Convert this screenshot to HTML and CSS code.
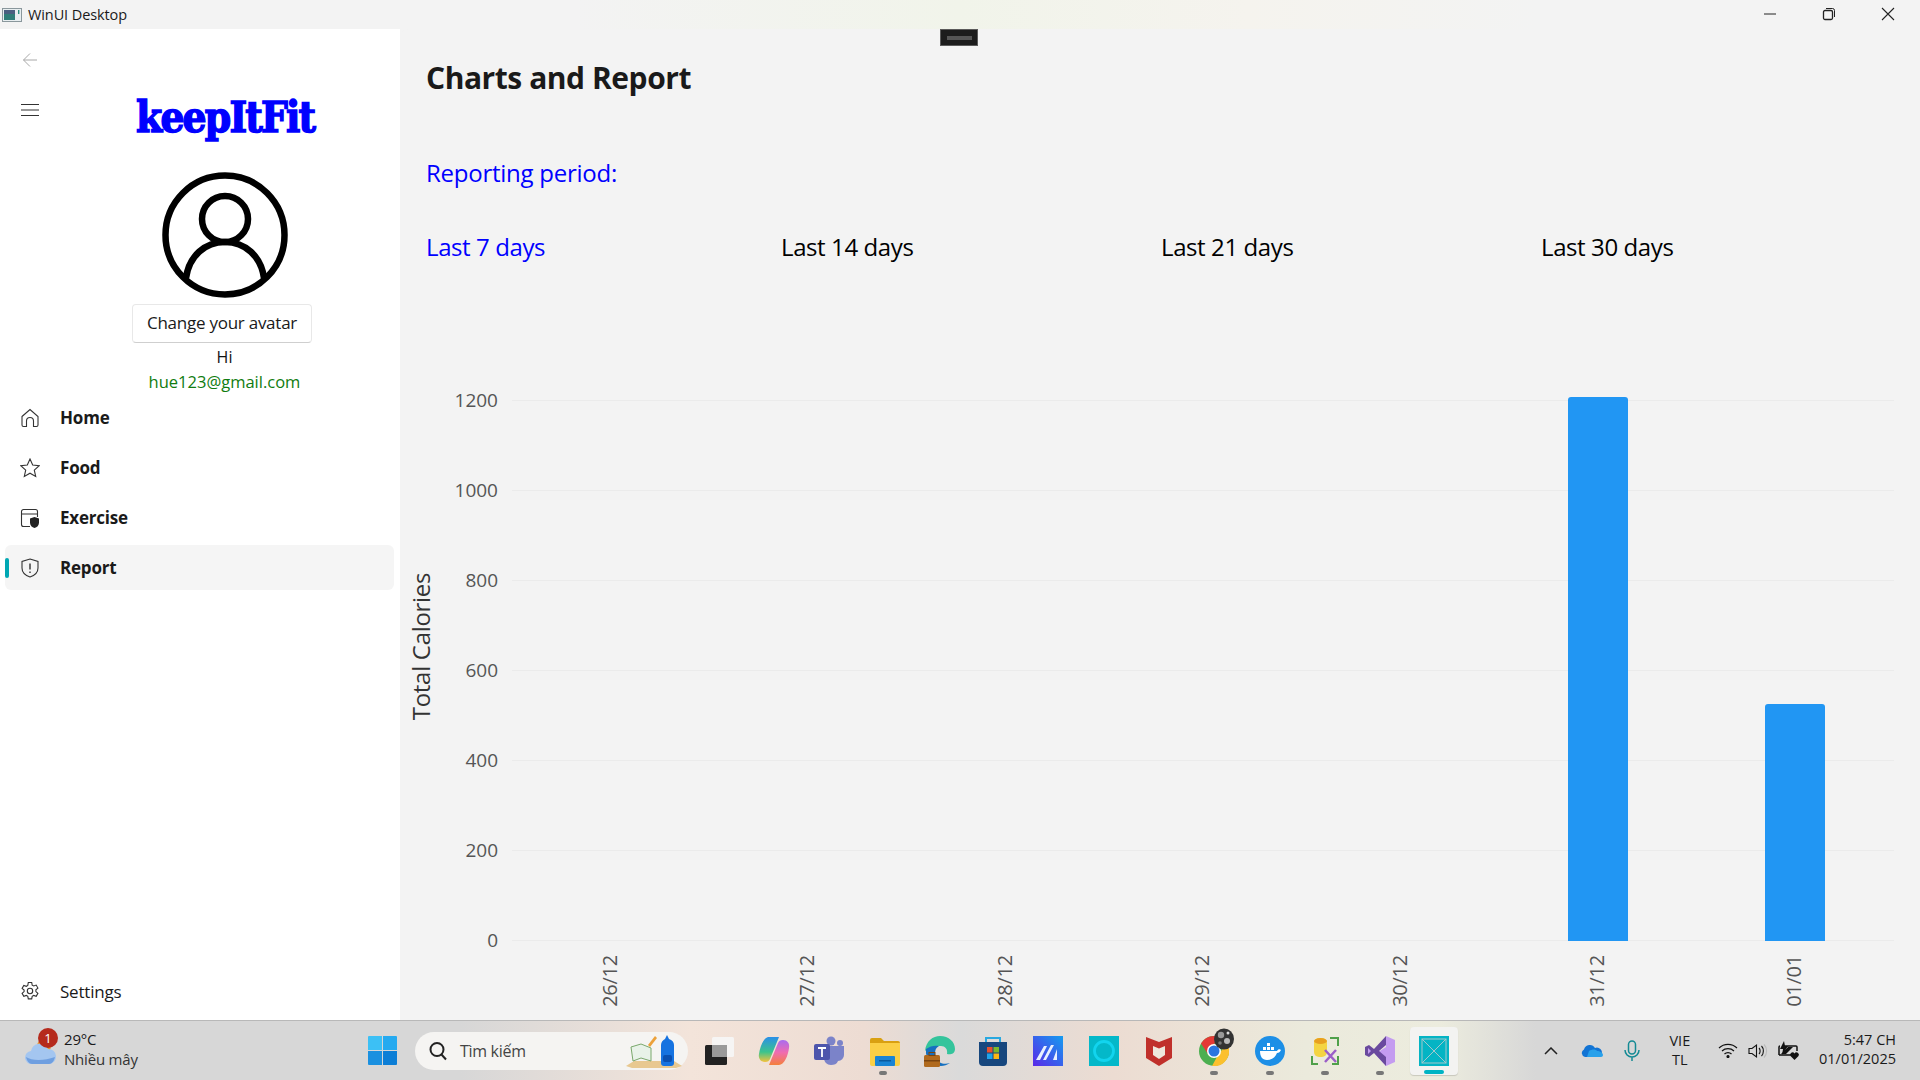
FILE: index.html
```html
<!DOCTYPE html>
<html lang="en">
<head>
    <meta charset="UTF-8">
    <title>WinUI Desktop</title>
    <link rel="stylesheet" href="styles.css">
</head>
<body>
    <header class="titlebar">
        <div class="app-title">
            <svg class="app-icon" width="20" height="14" viewBox="0 0 20 14">
                <rect x="0.5" y="0.5" width="19" height="13" fill="#e8eef0" stroke="#8a979c"/>
                <rect x="2" y="2" width="11" height="10" fill="#2f7d78"/>
                <rect x="2" y="2" width="11" height="4" fill="#4a5f80"/>
                <rect x="16" y="2" width="1.4" height="4" fill="#2c8f7f"/>
            </svg>
            <span>WinUI Desktop</span>
        </div>
        <div class="window-buttons">
            <svg width="14" height="14" viewBox="0 0 14 14"><path d="M1 7h12" stroke="#222" stroke-width="1"/></svg>
            <svg width="14" height="14" viewBox="0 0 14 14" fill="none" stroke="#222"><rect x="1.5" y="3.5" width="9" height="9" rx="1.5" stroke-width="1.3"/><path d="M4 1.5h6.5a2 2 0 0 1 2 2V10"/></svg>
            <svg width="14" height="14" viewBox="0 0 14 14"><path d="M1 1l12 12M13 1L1 13" stroke="#222" stroke-width="1.1"/></svg>
        </div>
    </header>

    <div class="app">
        <aside class="sidebar">
            <div class="sidebar-top">
                <div class="side-icons">
                    <svg width="16" height="16" viewBox="0 0 16 16" fill="none" stroke="#a8a8a8" stroke-width="1"><path d="M15 8H1.5M8 1.5L1.5 8 8 14.5"/></svg>
                    <svg class="menu-icon" width="18" height="14" viewBox="0 0 18 14" stroke="#333" stroke-width="1.1"><path d="M0 1.5h18M0 7h18M0 12.5h18"/></svg>
                </div>
                <div class="logo">keepItFit</div>
            </div>
            <div class="profile">
                <svg class="avatar" width="126" height="126" viewBox="0 0 126 126" fill="none" stroke="#000" stroke-width="6.5">
                    <circle cx="63" cy="63" r="59.5"/>
                    <circle cx="63" cy="47" r="23"/>
                    <path d="M24 106C27 84 43 70 63 70s36 14 39 36"/>
                </svg>
                <button class="avatar-btn">Change your avatar</button>
                <div class="hi">Hi</div>
                <div class="email">hue123@gmail.com</div>
            </div>
            <nav class="nav">
                <a class="nav-item">
                    <svg width="20" height="20" viewBox="0 0 20 20" fill="none" stroke="#333" stroke-width="1.1"><path d="M2 8.5L10 1.5l8 7v8.5a1.5 1.5 0 0 1-1.5 1.5H13.5V13a3.5 3.5 0 0 0-7 0v5.500H3.500A1.500 1.500 0 0 1 2 17z"/></svg>
                    <span>Home</span>
                </a>
                <a class="nav-item">
                    <svg width="20" height="20" viewBox="0 0 20 20" fill="none" stroke="#333" stroke-width="1.1"><path d="M10 1l2.700 6 6.500.7-4.900 4.400 1.400 6.400L10 15.200l-5.700 3.300 1.400-6.400L.8 7.700 7.300 7z"/></svg>
                    <span>Food</span>
                </a>
                <a class="nav-item">
                    <svg width="20" height="20" viewBox="0 0 20 20"><path d="M10 18.500H3.500a2 2 0 0 1-2-2v-13a2 2 0 0 1 2-2h12a2 2 0 0 1 2 2V9M1.500 6h16" fill="none" stroke="#333" stroke-width="1.1"/><path d="M14.500 9l4.500 1.500v4c0 3-2 5-4.500 5.500-2.500-.5-4.500-2.500-4.500-5.500v-4z" fill="#222"/></svg>
                    <span>Exercise</span>
                </a>
                <a class="nav-item selected">
                    <svg width="20" height="20" viewBox="0 0 20 20" fill="none" stroke="#333" stroke-width="1.1"><path d="M10 1l8 2.500V10c0 4.500-3.500 7.500-8 9-4.500-1.500-8-4.500-8-9V3.500z"/><path d="M10 5.500v6M10 13.500V15" stroke-width="1.4"/></svg>
                    <span>Report</span>
                </a>
            </nav>
            <a class="settings">
                <svg width="20" height="20" viewBox="0 0 20 20" fill="none" stroke="#333" stroke-width="1.1"><circle cx="10" cy="10" r="2.700"/><path d="M8.300 1.500h3.400l.5 2.600 1.500.9 2.500-.9 1.700 3-2 1.700v1.800l2 1.700-1.700 3-2.500-.9-1.500.9-.5 2.600H8.300l-.5-2.600-1.500-.9-2.500.9-1.700-3 2-1.700V9.100l-2-1.700 1.700-3 2.500.9 1.500-.9z"/></svg>
                <span>Settings</span>
            </a>
        </aside>

        <main class="content">
            <div class="drag-handle"><i></i></div>
            <h1>Charts and Report</h1>
            <div class="period-label">Reporting period:</div>
            <div class="periods">
                <div class="active">Last 7 days</div>
                <div>Last 14 days</div>
                <div>Last 21 days</div>
                <div>Last 30 days</div>
            </div>

            <section class="chart">
                <div class="y-title"><span>Total Calories</span></div>
                <div class="y-axis">
                    <span>1200</span><span>1000</span><span>800</span><span>600</span><span>400</span><span>200</span><span>0</span>
                </div>
                <div class="plot">
                    <div class="slot"></div>
                    <div class="slot"></div>
                    <div class="slot"></div>
                    <div class="slot"></div>
                    <div class="slot"></div>
                    <div class="slot"><div class="bar" style="height: 544px"></div></div>
                    <div class="slot"><div class="bar" style="height: 237px"></div></div>
                </div>
                <div class="x-axis">
                    <div><span>26/12</span></div>
                    <div><span>27/12</span></div>
                    <div><span>28/12</span></div>
                    <div><span>29/12</span></div>
                    <div><span>30/12</span></div>
                    <div><span>31/12</span></div>
                    <div><span>01/01</span></div>
                </div>
            </section>
        </main>
    </div>

    <footer class="taskbar">
        <div class="weather">
            <div class="weather-icon">
                <svg width="34" height="34" viewBox="0 0 34 34">
                    <circle cx="21" cy="13" r="7" fill="#e8922e"/>
                    <path d="M9 31a6.500 6.500 0 0 1-1-13 9 9 0 0 1 17-2 7.500 7.500 0 0 1 1 15z" fill="#a4c6f0"/>
                    <path d="M3 24c6 4 18 4 29 0-1 4-3 7-6 7H9c-3 0-5-3-6-7z" fill="#6f9fe0"/>
                </svg>
                <b class="badge">1</b>
            </div>
            <div class="weather-text">
                <div>29°C</div>
                <div>Nhiều mây</div>
            </div>
        </div>

        <svg class="start" width="29" height="29" viewBox="0 0 29 29">
            <path d="M1 0h13v14H0V1a1 1 0 0 1 1-1z" fill="#3cc0f5"/>
            <path d="M15 0h13a1 1 0 0 1 1 1v13H15z" fill="#25aaf0"/>
            <path d="M0 15h14v14H1a1 1 0 0 1-1-1z" fill="#1a90e0"/>
            <path d="M15 15h14v13a1 1 0 0 1-1 1H15z" fill="#0c7ed6"/>
        </svg>

        <div class="search">
            <svg width="20" height="20" viewBox="0 0 20 20" fill="none" stroke="#222" stroke-width="2"><circle cx="9" cy="8.500" r="6.500"/><path d="M13.500 13.500L18 18.500"/></svg>
            <span>Tìm kiếm</span>
            <svg class="search-art" width="56" height="36" viewBox="0 0 56 36">
                <path d="M0 33l8-5h40l8 5-6 2H6z" fill="#e8c890"/>
                <path d="M5 14l10-3 10 4v13l-10-3-8 3z" fill="#e8f2e8" stroke="#7aa86c"/>
                <path d="M22 12l7-9 2 2-7 9z" fill="#eca13a"/>
                <path d="M35 30V12c0-3 2-5 4-6l2-4 2 4c3 1 5 3 5 6v18a3 3 0 0 1-3 3H38a3 3 0 0 1-3-3z" fill="#1572e0"/>
                <rect x="37" y="22" width="9" height="7" rx="2" fill="#0a4fb0"/>
            </svg>
        </div>

        <div class="task-icons">
            <!-- task view -->
            <div class="task-icon">
                <svg class="nudge" width="30" height="30" viewBox="0 0 30 30"><rect x="1" y="9" width="22" height="20" rx="1.500" fill="#222"/><rect x="8" y="1" width="22" height="20" rx="1.500" fill="#f6f6f6" opacity=".92"/><rect x="8" y="9" width="15" height="12" fill="#9a9a9a"/></svg>
            </div>
            <!-- copilot -->
            <div class="task-icon">
                <svg class="nudge" width="32" height="30" viewBox="0 0 32 30">
                    <defs>
                        <linearGradient id="cpl" x1="0" y1="0" x2="0" y2="1"><stop offset="0" stop-color="#2a8fe8"/><stop offset=".6" stop-color="#3cc48c"/><stop offset="1" stop-color="#f4c23c"/></linearGradient>
                        <linearGradient id="cpr" x1="0" y1="0" x2="0" y2="1"><stop offset="0" stop-color="#a86cf0"/><stop offset=".5" stop-color="#f06cb0"/><stop offset="1" stop-color="#f4803c"/></linearGradient>
                    </defs>
                    <path d="M11 1h10l-9 22c-1 2-2 3-5 3-4 0-7-3-6-8C2 10 6 1 11 1z" fill="url(#cpl)"/>
                    <path d="M21 29H11l9-22c1-2 2-3 5-3 4 0 7 3 6 8-1 8-5 17-10 17z" fill="url(#cpr)"/>
                </svg>
            </div>
            <!-- teams -->
            <div class="task-icon">
                <svg class="nudge" width="30" height="30" viewBox="0 0 30 30"><circle cx="26" cy="7" r="3" fill="#7b83c9"/><circle cx="17" cy="5" r="4.500" fill="#7b83c9"/><path d="M10 10h20v9a6 6 0 0 1-6 6c-1 3-4 4-7 4-4 0-7-3-7-7z" fill="#7b83c9"/><rect x="0" y="8" width="16" height="16" rx="2" fill="#4d55ac"/><path d="M4 12h8M8 12v9" stroke="#fff" stroke-width="1.800"/></svg>
            </div>
            <!-- explorer -->
            <div class="task-icon dot">
                <svg class="nudge" width="30" height="30" viewBox="0 0 30 30"><path d="M0 4a2 2 0 0 1 2-2h9l3 3h14a2 2 0 0 1 2 2v4H0z" fill="#d9a011"/><path d="M0 7h30v21a2 2 0 0 1-2 2H2a2 2 0 0 1-2-2z" fill="#fbcf45"/><rect x="5" y="20" width="20" height="10" rx="1" fill="#1a84d4"/><rect x="9" y="24" width="12" height="1.500" fill="#0b5a9e"/></svg>
            </div>
            <!-- edge for business -->
            <div class="task-icon">
                <svg class="nudge" width="32" height="32" viewBox="0 0 32 32"><path d="M1 16C2 6 9 1 16 1c9 0 15 6 15 13 0 5-5 6-8 5 1-5-2-8-6-8-6 0-12 1-16 5z" fill="#34c49c"/><path d="M2 14C6 11 11 10 15 11c-4 2-5 7-3 12 2 5 8 7 14 5-3 2-6 3-9 3C8 31 1 25 2 14z" fill="#1670c0"/><rect x="0" y="20" width="16" height="12" rx="1.500" fill="#b06a1e"/><rect x="5" y="17.500" width="6" height="3" fill="none" stroke="#7a4510"/><rect x="0" y="25" width="16" height="1.500" fill="#7a4510"/></svg>
            </div>
            <!-- store -->
            <div class="task-icon">
                <svg width="30" height="32" viewBox="0 0 30 32"><path d="M8 8V3h14v5" fill="none" stroke="#29a8e0" stroke-width="2"/><path d="M1 7h28v20a4 4 0 0 1-4 4H5a4 4 0 0 1-4-4z" fill="#17477e"/><rect x="9" y="12" width="5.500" height="5.500" fill="#e8502e"/><rect x="15.500" y="12" width="5.500" height="5.500" fill="#7ab82c"/><rect x="9" y="18.500" width="5.500" height="5.500" fill="#1ea4ea"/><rect x="15.500" y="18.500" width="5.500" height="5.500" fill="#fcb614"/></svg>
            </div>
            <!-- mail app -->
            <div class="task-icon">
                <svg width="30" height="30" viewBox="0 0 30 30"><defs><linearGradient id="mm" x1="1" y1="0" x2="0" y2="1"><stop offset="0" stop-color="#149cf0"/><stop offset="1" stop-color="#5a28e8"/></linearGradient></defs><rect width="30" height="30" fill="url(#mm)"/><path d="M3 24l8-14h3L7 24zM10 24l8-15h3l-8 15zM20 24l4-11v11z" fill="#e8f0ff"/></svg>
            </div>
            <!-- alexa -->
            <div class="task-icon">
                <svg width="30" height="30" viewBox="0 0 30 30"><rect width="30" height="30" fill="#04b8c9"/><circle cx="15" cy="15" r="9.500" fill="none" stroke="#12d4ee" stroke-width="2.800"/></svg>
            </div>
            <!-- mcafee -->
            <div class="task-icon">
                <svg width="26" height="30" viewBox="0 0 26 30"><path d="M0 1l13 5 13-5v21l-13 8-13-8z" fill="#c0302b"/><path d="M7 10l6 2.500 6-2.500v9l-6 4-6-4z" fill="#eee8dc"/></svg>
            </div>
            <!-- chrome -->
            <div class="task-icon dot">
                <svg width="30" height="30" viewBox="0 0 30 30"><circle cx="15" cy="15" r="15" fill="#4caf50"/><path d="M15 0a15 15 0 0 1 13 7.500H15z" fill="#e53935"/><path d="M2 7.500A15 15 0 0 1 15 0v7.500L9 18z" fill="#e53935"/><path d="M28 7.500A15 15 0 0 1 13 30l6-11z" fill="#fbc02d"/><circle cx="15" cy="15" r="7" fill="#fff"/><circle cx="15" cy="15" r="5.500" fill="#2a75e0"/></svg>
                <svg class="chrome-badge" width="20" height="22" viewBox="0 0 20 22"><ellipse cx="10" cy="11" rx="10" ry="10.500" fill="#333"/><circle cx="7" cy="7" r="3.200" fill="#999"/><circle cx="13" cy="13" r="3" fill="#bbb"/><circle cx="6" cy="15" r="1.800" fill="#777"/><circle cx="14" cy="5" r="1.500" fill="#ddd"/></svg>
            </div>
            <!-- docker -->
            <div class="task-icon dot">
                <svg width="30" height="30" viewBox="0 0 30 30"><circle cx="15" cy="15" r="15" fill="#1d8fe6"/><path d="M5 15h17c1-2 3-2 4-1-1 2-2 3-4 3-2 5-6 7-10 7-5 0-7-4-7-9z" fill="#fff"/><path d="M8 11h3v3H8zM12 11h3v3h-3zM16 11h3v3h-3zM12 7h3v3h-3z" fill="#fff"/></svg>
            </div>
            <!-- sql tools -->
            <div class="task-icon dot">
                <svg width="30" height="30" viewBox="0 0 30 30"><path d="M20 2h8v8M28 20v8h-6M2 20v8h6" fill="none" stroke="#4fa04a" stroke-width="2"/><rect x="4" y="2" width="13" height="19" rx="5" fill="#f4d442"/><ellipse cx="10.500" cy="5" rx="6.500" ry="3" fill="#e8a020"/><path d="M15 14l11 12M26 14L15 26" stroke="#9b5fc8" stroke-width="2.500"/></svg>
            </div>
            <!-- visual studio -->
            <div class="task-icon dot">
                <svg width="30" height="30" viewBox="0 0 30 30"><path d="M21 0l9 4v22l-9 4-11-12 11-7z" fill="#c49cf0"/><path d="M21 0L9 13l-5-4-4 2v8l4 2 5-4 12 13v-9l-7-6 7-6z" fill="#6a4a9e"/><path d="M3 12l3 3-3 3z" fill="#c49cf0"/></svg>
            </div>
            <div class="task-icon running">
                <svg width="30" height="30" viewBox="0 0 30 30"><rect width="30" height="30" fill="#04b4c4"/><rect x="3" y="3" width="24" height="24" fill="none" stroke="#a4c8cc" stroke-width="1"/><path d="M3 3l24 24M27 3L3 27" stroke="#a4c8cc" stroke-width="1"/></svg>
            </div>
        </div>

        <div class="tray">
            <svg class="tray-chevron" width="14" height="8" viewBox="0 0 14 8" fill="none" stroke="#222" stroke-width="1.500"><path d="M1 7l6-6 6 6"/></svg>
            <svg class="tray-cloud" width="22" height="14" viewBox="0 0 22 14"><path d="M4 13a4 4 0 0 1-1-7.500A6 6 0 0 1 14 4a4.500 4.500 0 0 1 4 9z" fill="#1274d4"/><path d="M8 7c3-2 7-2 8 0 3 0 6 2 6 4s-2 2-3 2H6z" fill="#28a0ea"/></svg>
            <svg class="tray-mic" width="16" height="22" viewBox="0 0 16 22" fill="none" stroke="#148a94" stroke-width="1.500"><rect x="4.500" y="1" width="7" height="13" rx="3.500"/><path d="M1 10a7 7 0 0 0 14 0M8 17v4"/></svg>
            <div class="lang"><div>VIE</div><div>TL</div></div>
            <svg class="tray-wifi" width="20" height="15" viewBox="0 0 20 15" fill="none" stroke="#111" stroke-width="1.200"><path d="M1 5a13 13 0 0 1 18 0M4 8a9 9 0 0 1 12 0M6.500 11a5 5 0 0 1 7 0"/><circle cx="10" cy="13.500" r="1" fill="#111"/></svg>
            <svg class="tray-volume" width="20" height="16" viewBox="0 0 20 16" fill="none" stroke="#111" stroke-width="1.100"><path d="M1 5.500h3L8.500 2v12L4 10.500H1z"/><path d="M11 5c1.500 1.500 1.500 4.500 0 6M13.500 3c2.500 2.500 2.500 7.500 0 10"/><path d="M16 1.500c3.500 3.500 3.500 9.500 0 13" stroke="#bbb"/></svg>
            <svg class="tray-battery" width="22" height="20" viewBox="0 0 22 20"><path d="M5 5h13a1 1 0 0 1 1 1v4M1 14V6a1 1 0 0 1 1-1M1 14h12" fill="none" stroke="#111" stroke-width="1.500"/><path d="M6 0L2 8h3l-1 6 6-9H7z" fill="#111"/><path d="M3 13l7-7h5l-7 7z" fill="#111"/><path d="M16.500 19l-4-4a2.300 2.300 0 0 1 4-2.500 2.300 2.300 0 0 1 4 2.500z" fill="#111"/></svg>
            <div class="clock"><div>5:47 CH</div><div>01/01/2025</div></div>
        </div>
    </footer>
</body>
</html>
```

FILE: styles.css
```css
* {
    box-sizing: border-box;
}
html, body {
    height: 100%;
}
body {
    margin: 0;
    width: 1920px;
    height: 1080px;
    overflow: hidden;
    display: flex;
    flex-direction: column;
    font-family: "Open Sans", "Noto Sans", sans-serif;
    color: #1a1a1a;
    background-color: #f3f3f3;
}

/* title bar */
.titlebar {
    height: 29px;
    flex: none;
    display: flex;
    justify-content: space-between;
    align-items: center;
    background: linear-gradient(90deg, #f3f3f3 30%, #f1f4ea 50%, #f5f3ee 65%, #f3f3f3 80%);
}
.app-title {
    display: flex;
    align-items: center;
    gap: 6px;
    padding-left: 2px;
    font-size: 14.5px;
    letter-spacing: -0.1px;
}
.window-buttons {
    display: flex;
    align-items: center;
    gap: 45px;
    padding-right: 25px;
    margin-top: -2px;
}

.app {
    flex: 1;
    display: flex;
    min-height: 0;
}

/* sidebar */
.sidebar {
    width: 400px;
    flex: none;
    background-color: #fff;
    display: flex;
    flex-direction: column;
}
.sidebar-top {
    display: flex;
    height: 140px;
}
.side-icons {
    width: 136px;
    padding: 23px 0 0 22px;
    display: flex;
    flex-direction: column;
    gap: 35px;
}
.menu-icon {
    margin-left: -1px;
}
.logo {
    font-family: "DejaVu Serif", serif;
    font-weight: 700;
    font-stretch: condensed;
    font-size: 42px;
    letter-spacing: -1.8px;
    line-height: 46px;
    color: #0000ff;
    -webkit-text-stroke: 1.4px #0000ff;
    margin-top: 66px;
    height: 46px;
}
.profile {
    display: flex;
    flex-direction: column;
    align-items: center;
    padding-left: 49px;
}
.avatar {
    display: block;
    margin-top: 3px;
}
.avatar-btn {
    width: 180px;
    height: 39px;
    margin: 6px 5px 0 0;
    padding: 0 0 2px;
    font: inherit;
    font-size: 17px;
    letter-spacing: -0.25px;
    color: #1a1a1a;
    background-color: #fff;
    border: 1px solid #e8e8e8;
    border-bottom-color: #cfcfcf;
    border-radius: 4px;
}
.hi {
    font-size: 16px;
    line-height: 24px;
    margin-top: 2px;
    color: #111;
}
.email {
    font-size: 16.5px;
    line-height: 24px;
    margin-top: 1px;
    color: #107c10;
}
.nav {
    margin-top: 1px;
    padding: 0 6px 0 5px;
    display: flex;
    flex-direction: column;
    gap: 5px;
}
.nav-item {
    height: 45px;
    display: flex;
    align-items: center;
    gap: 20px;
    padding-left: 15px;
    position: relative;
    border-radius: 6px;
    font-size: 17px;
    font-weight: 700;
    letter-spacing: -0.2px;
}
.nav-item.selected {
    background-color: #f5f5f5;
}
.nav-item.selected::before {
    content: "";
    position: absolute;
    left: 0;
    top: 13px;
    width: 4px;
    height: 20px;
    border-radius: 2px;
    background-color: #00a7b3;
}
.settings {
    margin-top: auto;
    height: 58px;
    padding-left: 20px;
    display: flex;
    align-items: center;
    gap: 20px;
    font-size: 17px;
    letter-spacing: -0.2px;
}

/* main panel */
.content {
    flex: 1;
    min-width: 0;
    padding: 0 26px;
    background-color: #f3f3f3;
    border-top-left-radius: 8px;
    display: flex;
    flex-direction: column;
    position: relative;
}
.drag-handle {
    position: absolute;
    top: 0;
    left: 540px;
    width: 38px;
    height: 17px;
    background-color: #1c1c1c;
    border: 1px solid #5a5a5a;
    display: flex;
    align-items: center;
    justify-content: center;
}
.drag-handle i {
    display: block;
    width: 25px;
    height: 4px;
    background-color: #555;
}
h1 {
    margin: 27px 0 0;
    font-size: 30px;
    line-height: 44px;
    font-weight: 700;
    letter-spacing: -0.45px;
}
.period-label {
    margin-top: 55px;
    font-size: 24px;
    line-height: 36px;
    letter-spacing: -0.25px;
    color: #0000ff;
}
.periods {
    margin-top: 38px;
    display: grid;
    grid-template-columns: 355px 380px 380px 1fr;
    font-size: 24px;
    line-height: 36px;
    letter-spacing: -0.4px;
    color: #000;
}
.periods .active {
    color: #0000ff;
}

/* chart */
.chart {
    margin: 135px 0 0 -26px;
    display: grid;
    grid-template-columns: 86px 1fr;
    grid-template-rows: 541px auto;
    position: relative;
}
.y-title {
    position: absolute;
    left: 0;
    top: 0;
    width: 42px;
    height: 541px;
    padding-bottom: 48px;
    display: flex;
    align-items: center;
    justify-content: center;
}
.y-title span {
    transform: rotate(-90deg);
    white-space: nowrap;
    font-size: 24px;
    letter-spacing: -0.3px;
    color: #333;
}
.y-axis {
    grid-column: 1;
    grid-row: 1;
    width: 98px;
    display: flex;
    flex-direction: column;
    justify-content: space-between;
    align-items: flex-end;
    font-size: 19px;
    line-height: 1px;
    color: #555;
}
.plot {
    grid-column: 2;
    grid-row: 1;
    margin-left: 26px;
    height: 541px;
    display: flex;
    align-items: flex-end;
    background-image: repeating-linear-gradient(180deg, #ebebeb 0, #ebebeb 1px, transparent 1px, transparent 90px);
}
.slot {
    flex: 1;
    display: flex;
    justify-content: center;
    align-items: flex-end;
}
.bar {
    width: 60px;
    background-color: #2196f3;
    border-radius: 3px 3px 0 0;
}
.x-axis {
    grid-column: 2;
    grid-row: 2;
    margin-left: 26px;
    display: flex;
    height: 64px;
}
.x-axis div {
    flex: 1;
    display: flex;
    justify-content: center;
    padding: 40px 2px 0 0;
}
.x-axis span {
    display: block;
    height: 0;
    line-height: 0;
    transform: rotate(-90deg);
    font-size: 20px;
    letter-spacing: -0.3px;
    color: #555;
}

/* taskbar */
.taskbar {
    height: 60px;
    flex: none;
    display: flex;
    align-items: center;
    position: relative;
    border-top: 1px solid #b8b8b8;
    background: linear-gradient(90deg, #d7d7d7 0, #d7d7d7 24%, #f3e4da 36%, #eddcd3 45%, #dadada 50%, #ecdcd2 58%, #ebeadc 68%, #ececde 75%, #d7d7d7 80%, #d7d7d7 100%);
}
.weather {
    width: 368px;
    flex: none;
    display: flex;
    align-items: center;
    gap: 4px;
    padding-left: 24px;
}
.weather-icon {
    position: relative;
    width: 36px;
    height: 40px;
}
.weather-icon svg {
    position: absolute;
    left: -1px;
    top: 2px;
}
.badge {
    position: absolute;
    left: 14px;
    top: -3px;
    width: 20px;
    height: 20px;
    border-radius: 50%;
    background-color: #b52a1c;
    color: #fff;
    font-size: 13px;
    font-weight: 400;
    line-height: 20px;
    text-align: center;
}
.weather-text {
    font-size: 15px;
    line-height: 20px;
    letter-spacing: -0.2px;
    color: #333;
    margin-top: -3px;
}
.weather-text div:first-child {
    color: #1a1a1a;
}
.start {
    flex: none;
}
.search {
    margin-left: 18px;
    width: 273px;
    height: 38px;
    flex: none;
    border-radius: 19px;
    background-color: #f5f4f2;
    display: flex;
    align-items: center;
    padding-left: 13px;
    gap: 12px;
    font-size: 16px;
    letter-spacing: -0.3px;
    color: #444;
    position: relative;
}
.search-art {
    position: absolute;
    right: 6px;
    top: 1px;
}
.task-icons {
    flex: none;
    margin-left: 1px;
    display: flex;
}
.task-icon {
    width: 55.3px;
    height: 48px;
    display: flex;
    align-items: center;
    justify-content: center;
    position: relative;
}
.task-icon .nudge {
    margin-left: 4px;
}
.task-icon.dot::after {
    content: "";
    position: absolute;
    bottom: 0;
    left: 50%;
    margin-left: -4px;
    width: 8px;
    height: 4px;
    border-radius: 2px;
    background-color: #777;
}
.chrome-badge {
    position: absolute;
    left: 27px;
    top: 1px;
}
.task-icon.running {
    background-color: #f3f3f1;
    border-radius: 4px;
    box-shadow: 0 1px 1px rgba(0, 0, 0, 0.15);
    width: 48px;
    margin-left: 2px;
}
.task-icon.running::after {
    content: "";
    position: absolute;
    bottom: 1px;
    left: 50%;
    margin-left: -10px;
    width: 20px;
    height: 4px;
    border-radius: 2px;
    background-color: #00b4c4;
}
.tray {
    flex: 1;
    display: flex;
    align-items: center;
    padding-right: 24px;
    font-size: 14.5px;
    color: #1a1a1a;
}
.tray-chevron {
    margin-left: 86px;
}
.tray-cloud {
    margin-left: 23px;
}
.tray-mic {
    margin-left: 21px;
}
.lang {
    margin-left: 20px;
    width: 40px;
    text-align: center;
    line-height: 19px;
    margin-top: -2px;
}
.tray-wifi {
    margin-left: 18px;
}
.tray-volume {
    margin-left: 10px;
}
.tray-battery {
    margin-left: 10px;
}
.clock {
    margin-left: auto;
    margin-top: -3px;
    text-align: right;
    line-height: 19px;
}
```
